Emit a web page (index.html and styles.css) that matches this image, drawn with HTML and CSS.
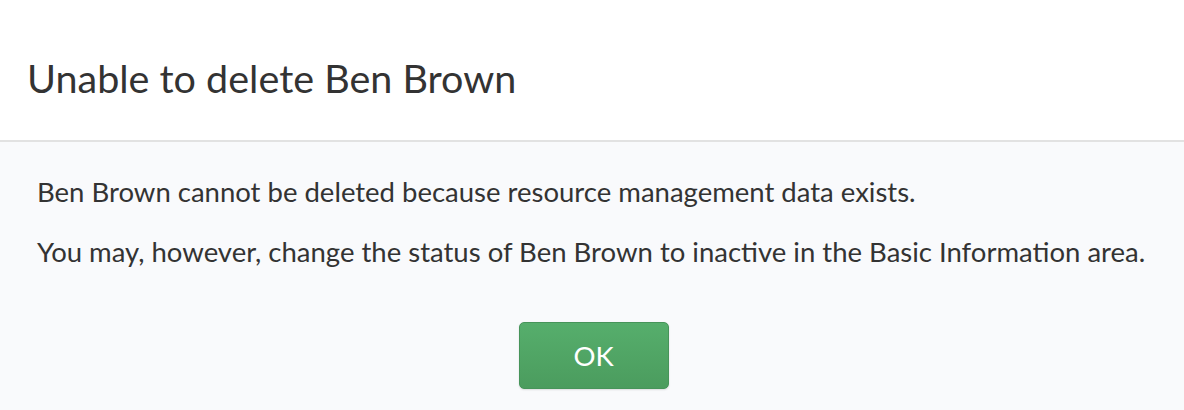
FILE: index.html
```html
<!DOCTYPE html>
<html>
<head>
<meta charset="utf-8">
<link rel="stylesheet" href="styles.css">
</head>
<body>
<div class="modal">
  <div class="modal-header">
    <h1 class="modal-title">Unable to delete Ben Brown</h1>
  </div>
  <div class="modal-body">
    <p class="msg">Ben Brown cannot be deleted because resource management data exists.</p>
    <p class="msg">You may, however, change the status of Ben Brown to inactive in the Basic Information area.</p>
    <div class="actions">
      <button class="btn-ok">OK</button>
    </div>
  </div>
</div>
</body>
</html>
```

FILE: styles.css
```css
html, body {
  margin: 0;
  padding: 0;
  background: #f9fafc;
}
body {
  font-family: Lato, "Liberation Sans", sans-serif;
  color: #333333;
  width: 1184px;
  height: 410px;
  overflow: hidden;
}
.modal-header {
  background: #ffffff;
  height: 142px;
  border-bottom: 2px solid #e2e2e2;
  padding: 54px 0 0 27px;
  box-sizing: border-box;
}
.modal-title {
  margin: 0;
  font-weight: 400;
  font-size: 39.5px;
  line-height: 47px;
  color: #333333;
}
.modal-body {
  padding: 33px 37px 0;
}
.msg {
  margin: 0 0 26px;
  font-size: 27.5px;
  line-height: 34px;
}
.actions {
  display: flex;
  justify-content: center;
  padding-top: 27px;
}
.btn-ok {
  width: 150px;
  height: 67px;
  border: 1px solid #47945a;
  border-radius: 5px;
  background: linear-gradient(#56ae6c, #4b9c5e);
  color: #ffffff;
  font-family: Lato, "Liberation Sans", sans-serif;
  font-size: 27.5px;
  box-shadow: 0 1px 2px rgba(0,0,0,0.12);
  margin-left: 3px;
}
```
